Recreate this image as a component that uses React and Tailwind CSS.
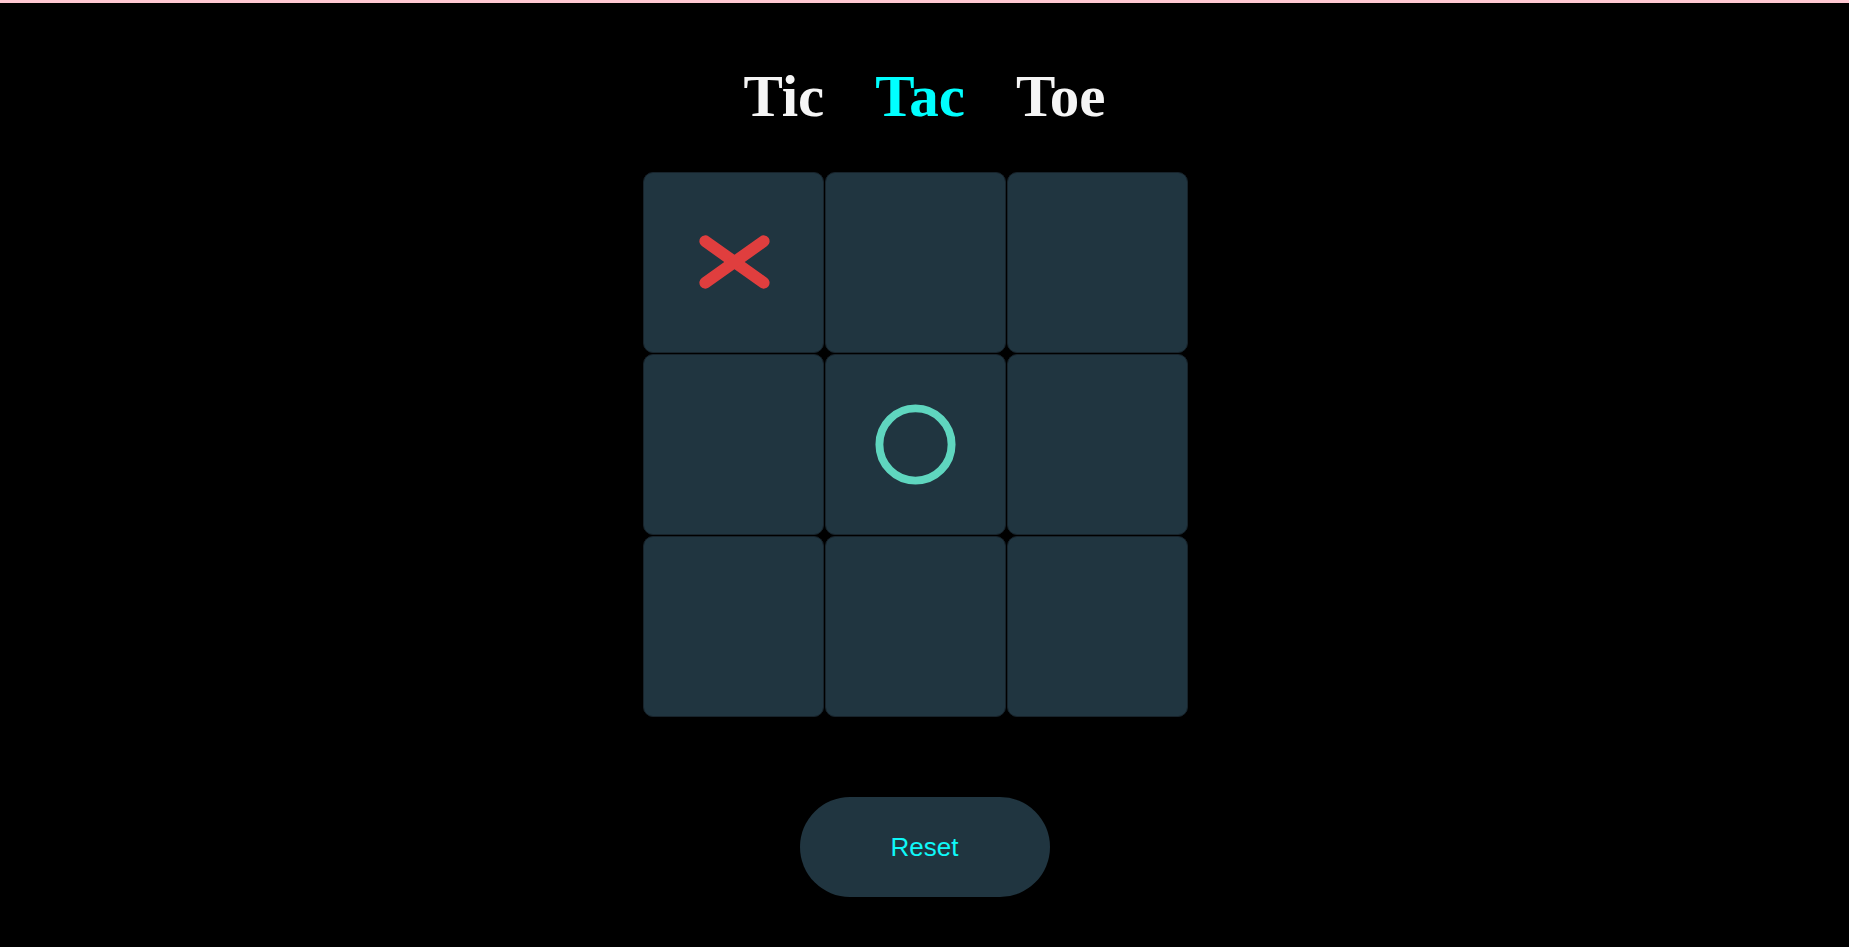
import React from "react";

const board = ["X", "", "", "", "O", "", "", "", ""];

function Mark({ v }) {
  if (v === "X") {
    return (
      <svg width="181" height="181" viewBox="0 0 181 181">
        <line x1="62" y1="69" x2="121" y2="111" stroke="#e03e3e" strokeWidth="12" strokeLinecap="round" />
        <line x1="121" y1="69" x2="62" y2="111" stroke="#e03e3e" strokeWidth="12" strokeLinecap="round" />
      </svg>
    );
  }
  if (v === "O") {
    return (
      <svg width="181" height="181" viewBox="0 0 181 181">
        <circle cx="90.5" cy="90.5" r="36.5" fill="none" stroke="#5fd6bf" strokeWidth="8" />
      </svg>
    );
  }
  return null;
}

export default function App() {
  return (
    <div className="min-h-screen bg-black border-t-[3px] border-[#ffc8d2] flex flex-col items-center">
      <h1
        className="mt-[64px] flex gap-[51px] text-[59px] leading-none font-bold text-[#f5f5f5]"
        style={{ fontFamily: '"Liberation Serif", "Times New Roman", serif' }}
      >
        <span>Tic</span>
        <span className="text-[#00ffff]">Tac</span>
        <span>Toe</span>
      </h1>
      <div className="mt-[46px] w-[563px]">
        <div className="grid grid-cols-[181px_181px_181px] gap-[1px] w-[545px]">
          {board.map((v, i) => (
            <div
              key={i}
              className="h-[181px] rounded-[10px] bg-[#203540] border border-[#17232b] flex items-center justify-center overflow-hidden"
            >
              <Mark v={v} />
            </div>
          ))}
        </div>
      </div>
      <button
        className="mt-[80px] w-[250px] h-[100px] rounded-full bg-[#203540] text-[#0ff8f8] text-[26px]"
        style={{ fontFamily: '"Liberation Sans", Arial, sans-serif' }}
      >
        Reset
      </button>
    </div>
  );
}
